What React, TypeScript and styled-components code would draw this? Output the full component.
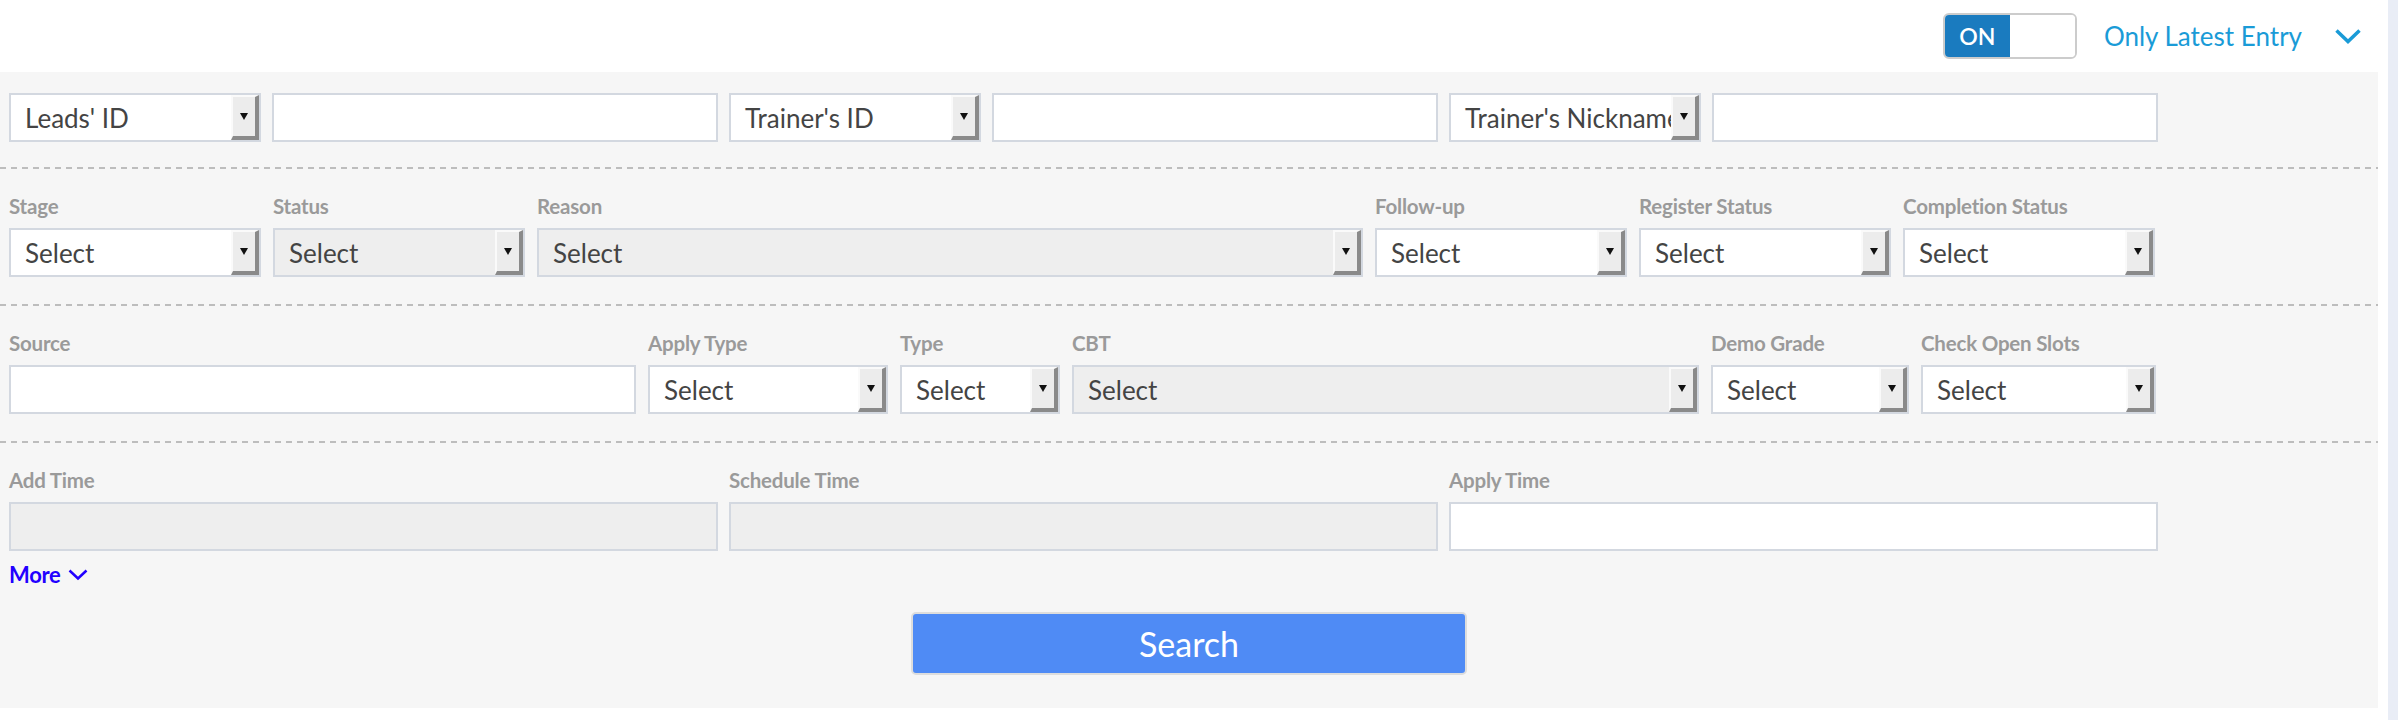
import React from "react";
import styled, { createGlobalStyle } from "styled-components";

const GlobalStyle = createGlobalStyle`
  html, body {
    margin: 0;
    padding: 0;
    background: #ffffff;
    font-family: Lato, "Open Sans", sans-serif;
  }
`;

const Page = styled.div`
  width: 2398px;
  height: 720px;
  display: flex;
  flex-direction: row;
  overflow: hidden;
`;

const Main = styled.div`
  flex: 1;
  display: flex;
  flex-direction: column;
`;

const ScrollStrip = styled.div`
  width: 10px;
  background: #e9edf6;
`;

const TopBar = styled.div`
  height: 72px;
  display: flex;
  flex-direction: row;
  justify-content: flex-end;
  align-items: center;
  padding-right: 25px;
`;

const Toggle = styled.div`
  width: 134px;
  height: 46px;
  box-sizing: border-box;
  border: 2px solid #cccccc;
  border-radius: 6px;
  overflow: hidden;
  display: flex;
  margin-right: 27px;
`;

const ToggleOn = styled.div`
  width: 65px;
  background: #1a7bbf;
  color: #ffffff;
  font-size: 23px;
  font-weight: 600;
  display: flex;
  align-items: center;
  justify-content: center;
`;

const ToggleOff = styled.div`
  flex: 1;
  background: #ffffff;
`;

const LatestText = styled.span`
  color: #1a9bd7;
  font-size: 26px;
  margin-right: 31px;
`;

const Panel = styled.div`
  width: 2378px;
  height: 636px;
  box-sizing: border-box;
  background: #f6f6f6;
  padding-top: 21px;
  display: flex;
  flex-direction: column;
`;

const Divider = styled.div<{ $top: number }>`
  height: 2px;
  margin-top: ${(p) => p.$top}px;
  background: repeating-linear-gradient(
    to right,
    #bdbdbd 0,
    #bdbdbd 6px,
    transparent 6px,
    transparent 11px
  );
`;

const Section = styled.div`
  padding-top: 25px;
`;

const Row = styled.div<{ $gap: number }>`
  display: flex;
  flex-direction: row;
  gap: ${(p) => p.$gap}px;
  padding-left: 9px;
`;

const Field = styled.div<{ $w: number }>`
  width: ${(p) => p.$w}px;
  display: flex;
  flex-direction: column;
  gap: 10px;
`;

const Label = styled.div`
  height: 24px;
  line-height: 24px;
  font-size: 20.5px;
  font-weight: 700;
  color: #9a9a9a;
  letter-spacing: -0.2px;
  white-space: nowrap;
`;

const SelectBox = styled.div<{ $w?: number; $disabled?: boolean }>`
  width: ${(p) => (p.$w ? `${p.$w}px` : "100%")};
  height: 49px;
  box-sizing: border-box;
  border: 2px solid #d3d8e0;
  background: ${(p) => (p.$disabled ? "#eeeeee" : "#ffffff")};
  display: flex;
  flex-direction: row;
  align-items: stretch;
`;

const SelectText = styled.div`
  flex: 1;
  padding-left: 14px;
  font-size: 26px;
  color: #444444;
  display: flex;
  align-items: center;
  white-space: nowrap;
  overflow: hidden;
`;

const ArrowBox = styled.div`
  width: 28px;
  box-sizing: border-box;
  background: #ececec;
  border-top: 2px solid #fafafa;
  border-left: 2px solid #fafafa;
  border-right: 4px solid #8a8a8a;
  border-bottom: 4px solid #8a8a8a;
  display: flex;
  align-items: center;
  justify-content: center;
  &::after {
    content: "";
    width: 0;
    height: 0;
    border-left: 4.5px solid transparent;
    border-right: 4.5px solid transparent;
    border-top: 7px solid #111111;
  }
`;

const TextInput = styled.div<{ $w?: number; $disabled?: boolean }>`
  width: ${(p) => (p.$w ? `${p.$w}px` : "100%")};
  height: 49px;
  box-sizing: border-box;
  border: 2px solid #d3d8e0;
  background: ${(p) => (p.$disabled ? "#eeeeee" : "#ffffff")};
`;

const MoreLink = styled.div`
  margin-top: 11px;
  padding-left: 9px;
  height: 24px;
  display: flex;
  align-items: center;
  gap: 6px;
  color: #2200ff;
  font-size: 22px;
  font-weight: 700;
  letter-spacing: -0.3px;
`;

const SearchButton = styled.button`
  align-self: center;
  width: 556px;
  height: 63px;
  margin-top: 26px;
  border: 2px solid #dddddd;
  border-radius: 5px;
  background: #4f8bf5;
  color: #ffffff;
  font-family: Lato, "Open Sans", sans-serif;
  font-size: 34px;
`;

const Select: React.FC<{ text: string; w?: number; disabled?: boolean }> = ({
  text,
  w,
  disabled,
}) => (
  <SelectBox $w={w} $disabled={disabled}>
    <SelectText>{text}</SelectText>
    <ArrowBox />
  </SelectBox>
);

const Chevron: React.FC<{ color: string; w: number; h: number; sw: number }> = ({
  color,
  w,
  h,
  sw,
}) => (
  <svg width={w} height={h} viewBox={`0 0 ${w} ${h}`}>
    <polyline
      points={`${sw},${sw} ${w / 2},${h - sw} ${w - sw},${sw}`}
      fill="none"
      stroke={color}
      strokeWidth={sw}
    />
  </svg>
);

type F = { label: string; w: number; kind: "select" | "input"; disabled?: boolean };

const row2: F[] = [
  { label: "Stage", w: 252, kind: "select" },
  { label: "Status", w: 252, kind: "select", disabled: true },
  { label: "Reason", w: 826, kind: "select", disabled: true },
  { label: "Follow-up", w: 252, kind: "select" },
  { label: "Register Status", w: 252, kind: "select" },
  { label: "Completion Status", w: 252, kind: "select" },
];

const row3: F[] = [
  { label: "Source", w: 627, kind: "input" },
  { label: "Apply Type", w: 240, kind: "select" },
  { label: "Type", w: 160, kind: "select" },
  { label: "CBT", w: 627, kind: "select", disabled: true },
  { label: "Demo Grade", w: 198, kind: "select" },
  { label: "Check Open Slots", w: 235, kind: "select" },
];

const row4: F[] = [
  { label: "Add Time", w: 709, kind: "input", disabled: true },
  { label: "Schedule Time", w: 709, kind: "input", disabled: true },
  { label: "Apply Time", w: 709, kind: "input" },
];

const FieldRow: React.FC<{ fields: F[]; gap: number }> = ({ fields, gap }) => (
  <Row $gap={gap}>
    {fields.map((f) => (
      <Field key={f.label} $w={f.w}>
        <Label>{f.label}</Label>
        {f.kind === "select" ? (
          <Select text="Select" disabled={f.disabled} />
        ) : (
          <TextInput $disabled={f.disabled} />
        )}
      </Field>
    ))}
  </Row>
);

export default function App() {
  return (
    <Page>
      <GlobalStyle />
      <Main>
        <TopBar>
          <Toggle>
            <ToggleOn>ON</ToggleOn>
            <ToggleOff />
          </Toggle>
          <LatestText>Only Latest Entry</LatestText>
          <Chevron color="#1a9bd7" w={30} h={18} sw={3.5} />
        </TopBar>
        <Panel>
          <Row $gap={11}>
            <Select text="Leads' ID" w={252} />
            <TextInput $w={446} />
            <Select text="Trainer's ID" w={252} />
            <TextInput $w={446} />
            <Select text="Trainer's Nickname" w={252} />
            <TextInput $w={446} />
          </Row>
          <Divider $top={25} />
          <Section>
            <FieldRow fields={row2} gap={12} />
          </Section>
          <Divider $top={27} />
          <Section>
            <FieldRow fields={row3} gap={12} />
          </Section>
          <Divider $top={27} />
          <Section>
            <FieldRow fields={row4} gap={11} />
          </Section>
          <MoreLink>
            More
            <Chevron color="#2200ff" w={22} h={13} sw={2.5} />
          </MoreLink>
          <SearchButton>Search</SearchButton>
        </Panel>
      </Main>
      <ScrollStrip />
    </Page>
  );
}
